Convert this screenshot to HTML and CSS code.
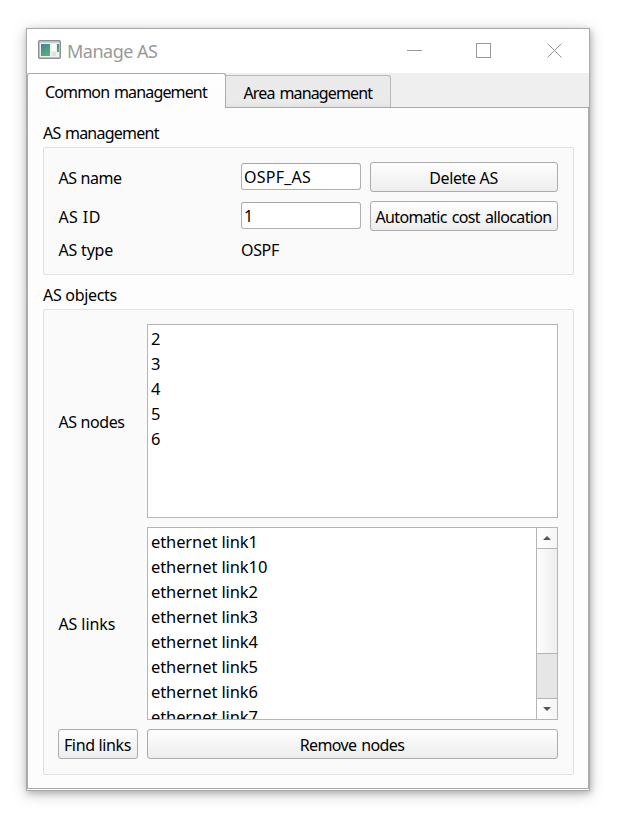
FILE: index.html
```html
<!DOCTYPE html>
<html lang="en">
<head>
<meta charset="utf-8">
<title>Manage AS</title>
<link rel="stylesheet" href="styles.css">
</head>
<body>
<div class="window">
  <header class="titlebar">
    <svg class="app-icon" width="24" height="20" viewBox="0 0 24 20">
      <defs><linearGradient id="g" x1="0" y1="0" x2=".5" y2="1"><stop offset="0" stop-color="#427f9f"/><stop offset="1" stop-color="#55b070"/></linearGradient></defs>
      <rect x=".75" y=".75" width="21.5" height="17.5" rx="1" fill="#edf0f2" stroke="#8b8d90" stroke-width="1.5"/>
      <path d="M2 2.5h19" stroke="#c7ced6"/>
      <rect x="3" y="4" width="9" height="12" fill="url(#g)"/>
      <rect x="14" y="4" width="4" height="7" fill="#fafafa"/>
      <rect x="14" y="12" width="4" height="4" fill="#e1e3e3"/>
      <rect x="19" y="4" width="2" height="8" fill="url(#g)"/>
    </svg>
    <h1 class="title">Manage AS</h1>
    <svg class="controls" width="156" height="16" viewBox="0 0 156 16" fill="none" stroke="#999" shape-rendering="crispEdges">
      <path d="M0 7.5h15"/>
      <rect x="69.5" y=".5" width="14" height="14"/>
      <path d="M140.5 .5l14 14M154.500 .5l-14 14" shape-rendering="auto"/>
    </svg>
  </header>
  <nav class="tabs">
    <div class="tab active">Common management</div>
    <div class="tab">Area management</div>
  </nav>
  <main class="pane">
    <h2 class="heading wide">AS management</h2>
    <section class="group management">
      <label>AS name</label><div class="input">OSPF_AS</div><div class="button">Delete AS</div>
      <label class="id">AS ID</label><div class="input">1</div><div class="button long">Automatic cost allocation</div>
      <label class="type">AS type</label><div class="value">OSPF</div>
    </section>
    <h2 class="heading second">AS objects</h2>
    <section class="group objects">
      <label>AS nodes</label>
      <div class="list"><ul class="items"><li>2</li><li>3</li><li>4</li><li>5</li><li>6</li></ul></div>
      <label class="links">AS links</label>
      <div class="list">
        <ul class="items"><li>ethernet link1</li><li>ethernet link10</li><li>ethernet link2</li><li>ethernet link3</li><li>ethernet link4</li><li>ethernet link5</li><li>ethernet link6</li><li>ethernet link7</li></ul>
        <div class="scrollbar">
          <div class="arrow"><svg width="8" height="4" viewBox="0 0 8 4"><path d="M0 4L4 0l4 4z" fill="#555"/></svg></div>
          <div class="thumb"></div>
          <div class="track"></div>
          <div class="arrow down"><svg width="8" height="4" viewBox="0 0 8 4"><path d="M0 0l4 4 4-4z" fill="#555"/></svg></div>
        </div>
      </div>
      <div class="button">Find links</div>
      <div class="button long">Remove nodes</div>
    </section>
  </main>
</div>
</body>
</html>
```
FILE: styles.css
```css
* { box-sizing: border-box; }
body {
  margin: 0;
  padding: 28px 0 0 26px;
  height: 815px;
  overflow: hidden;
  background: #fff;
  color: #000;
  font: 16px/20px "Noto Sans", sans-serif;
  white-space: nowrap;
}
.window {
  width: 564px;
  height: 763px;
  border: 1px solid #aaa;
  background: #fff;
  box-shadow: 0 3px 14px rgba(0,0,0,.22), 1px 2px 6px rgba(0,0,0,.2);
  display: flex;
  flex-direction: column;
}
.titlebar { height: 44px; display: flex; align-items: center; padding: 0 26px 0 11px; }
.app-icon { margin-top: -2px; }
.title { margin: 0 0 0 5px; font-size: 18px; font-weight: 400; color: #999; letter-spacing: -.5px; }
.controls { margin-left: auto; }
.tabs { height: 34px; display: flex; align-items: flex-end; background: #efefef; }
.tab {
  width: 165px;
  height: 32px;
  border: 1px solid #b9b9b9;
  border-left: 0;
  border-bottom: 0;
  border-radius: 0 3px 0 0;
  background: linear-gradient(#eaeaea 85%, #e2e2e2);
  padding: 7px 0 0 17.5px;
  letter-spacing: -.85px;
  word-spacing: 1.5px;
}
.tab.active {
  width: 199px;
  height: 35px;
  margin-bottom: -1px;
  border: 1px solid #ababab;
  border-bottom: 0;
  border-radius: 3px 3px 0 0;
  background: linear-gradient(#fff, #fcfcfc);
  padding: 8px 0 0 17px;
  z-index: 1;
}
.pane {
  height: 682px;
  border: 1px solid #ababab;
  background: #fdfdfd;
  padding: 15px 14px 0 15px;
}
.heading { margin: 0; height: 20px; font-size: 16px; font-weight: 400; letter-spacing: -.3px; }
.heading.wide { letter-spacing: -.75px; word-spacing: 1px; }
.heading.second { margin-top: 10px; }
.group { margin-top: 4px; border: 1px solid #e0e0e0; border-radius: 2px; background: #fafafa; width: 531px; }
.management {
  height: 128px;
  padding: 14px 15px 0 14px;
  display: grid;
  grid-template-columns: 183px 120px 188px;
  grid-template-rows: 30px 30px 20px;
  row-gap: 9px;
  align-items: center;
}
.management .button { margin-left: 9px; width: 188px; }
label { padding: 2px 0 0 .5px; letter-spacing: -.4px; }
label.id { letter-spacing: .4px; }
label.links { padding-top: 0; letter-spacing: -.1px; }
label.type { padding-top: 0; letter-spacing: -.2px; }
.value, label.type { margin-top: -1px; }
.value { letter-spacing: -.35px; }
.input {
  width: 120px;
  height: 27px;
  margin-top: -1px;
  border: 1px solid #b0b0b0;
  border-top-color: #a5a5a5;
  border-radius: 3px;
  background: #fff;
  padding: 3px 0 0 2px;
  line-height: 20px;
  letter-spacing: .25px;
}
.button {
  height: 30px;
  border: 1px solid #ababab;
  border-radius: 3px;
  background: linear-gradient(#fefefe, #ededed);
  display: flex;
  align-items: center;
  justify-content: center;
  padding: 2px 1px 0 0;
  letter-spacing: -.35px;
}
.button.long { letter-spacing: -.65px; word-spacing: 1.5px; }
.objects {
  height: 466px;
  padding: 14px 15px 0 14px;
  display: grid;
  grid-template-columns: 80px 411px;
  grid-template-rows: 194px 193px 30px;
  gap: 9px;
  align-content: start;
  align-items: center;
}
.list { height: 100%; border: 1px solid #b5b5b5; background: #fff; display: flex; overflow: hidden; }
.items { list-style: none; margin: 0; padding: 1px 0 0 3px; flex: 1; font-size: 16.5px; line-height: 25px; letter-spacing: -.1px; }
.scrollbar { width: 21px; border-left: 1px solid #b5b5b5; display: flex; flex-direction: column; }
.arrow { height: 21px; display: flex; align-items: center; justify-content: center; background: linear-gradient(90deg, #fff, #f5f5f5); border-bottom: 1px solid #b5b5b5; }
.arrow.down { border: 0; border-top: 1px solid #b5b5b5; }
.thumb { height: 105px; background: linear-gradient(90deg, #fefefe, #eee); border-bottom: 1px solid #b5b5b5; }
.track { flex: 1; background: #e6e6e6; }
```
